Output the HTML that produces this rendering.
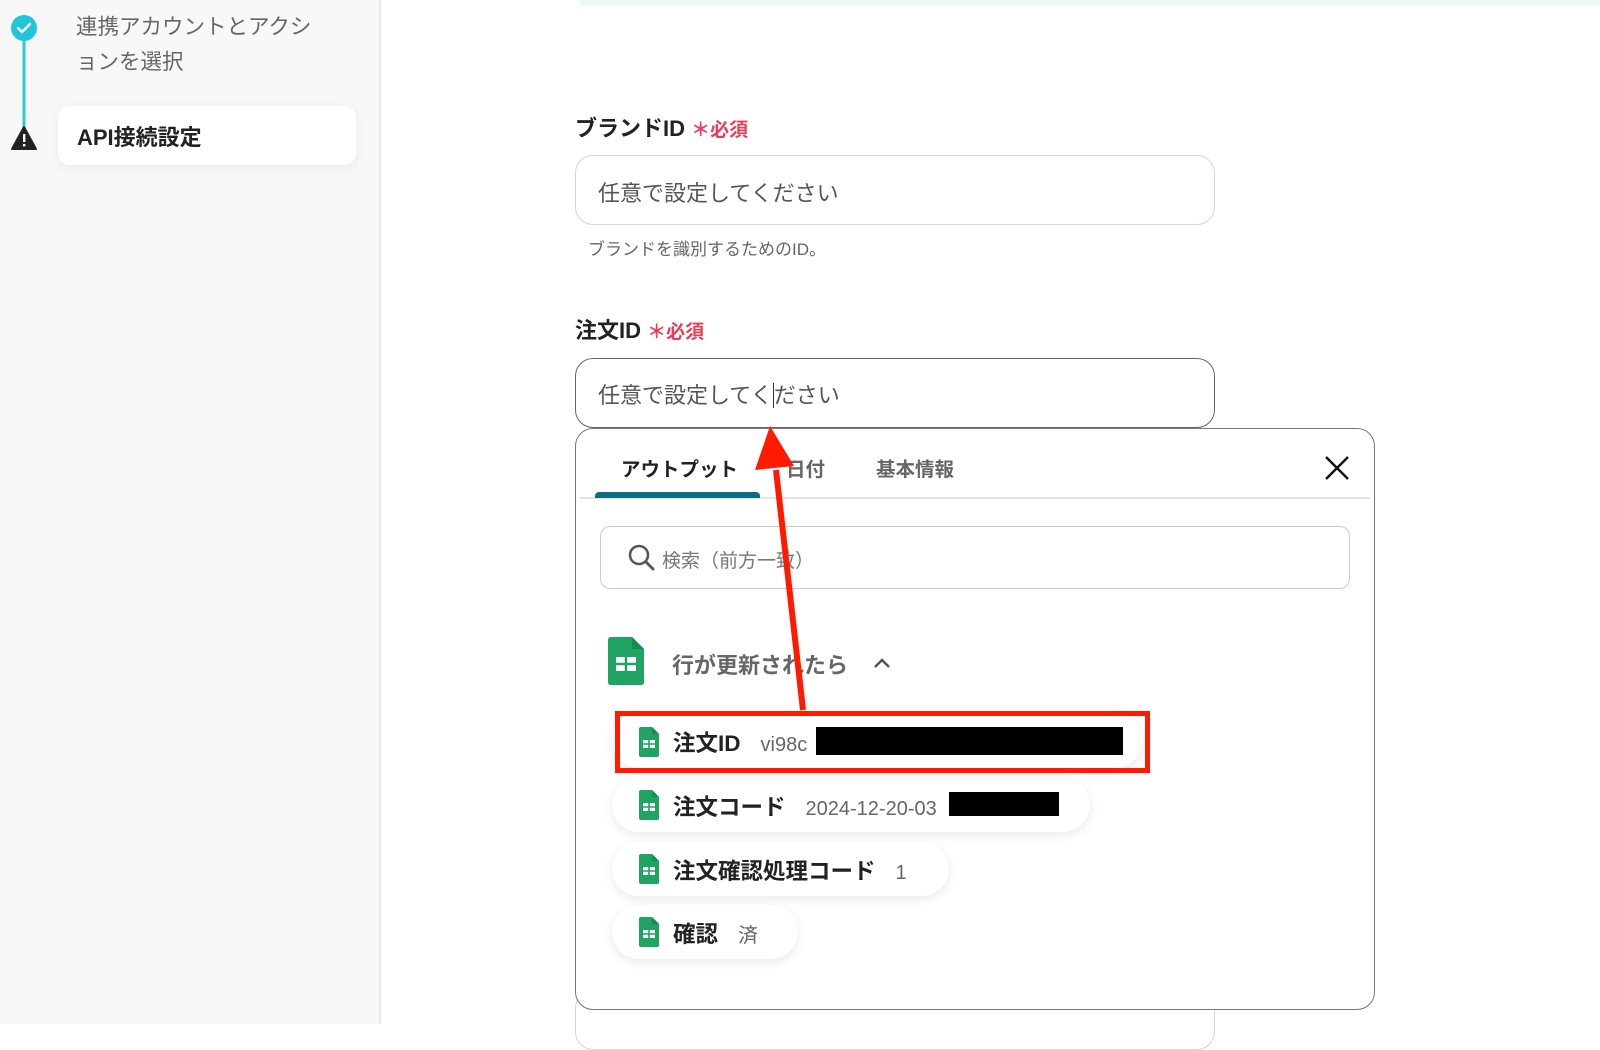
<!DOCTYPE html>
<html><head><meta charset="utf-8"><style>
*{margin:0;padding:0;box-sizing:border-box}
body{width:1600px;height:1024px;overflow:hidden;background:#fff;font-family:"Liberation Sans","Noto Sans CJK JP",sans-serif;position:relative;color:#222}
.a{position:absolute;white-space:nowrap}
.side{position:absolute;left:0;top:0;width:381px;height:1024px;background:#f8f8f8;border-right:2px solid #e6e6e6}
.inp{position:absolute;left:575px;width:640px;height:70px;border-radius:18px;background:#fff}
.ph{font-size:22px;color:#555;left:598px}
.lbl{font-size:22px;font-weight:bold;left:575px;color:#222}
.req{color:#f03b57;font-size:19px;font-weight:bold}
.pill{position:absolute;left:612px;height:54px;border-radius:27px;background:#fff;box-shadow:0 3px 10px rgba(0,0,0,.09)}
.it{font-size:22.5px;font-weight:bold;color:#222;left:673px}
.v{font-size:20px;color:#666;font-weight:normal;margin-left:14px}
</style></head><body>
<div class="side"></div>
<svg class="a" style="left:0;top:0" width="60" height="160">
<line x1="24" y1="30" x2="24" y2="128" stroke="#2ccfcf" stroke-width="3"/>
<circle cx="24" cy="28" r="13" fill="#1ec6d8"/>
<path d="M18 28 l4 4 l8 -8" stroke="#fff" stroke-width="2.5" fill="none" stroke-linecap="round" stroke-linejoin="round"/>
<path d="M24 127 L36 149 L12 149 Z" fill="#222" stroke="#222" stroke-width="2" stroke-linejoin="round"/>
<rect x="23" y="134" width="2.4" height="8" fill="#fff"/><rect x="23" y="144" width="2.4" height="2.4" fill="#fff"/>
</svg>
<div class="a" style="left:76px;top:10px;font-size:21.5px;color:#666;line-height:35px;white-space:normal;width:250px">連携アカウントとアクションを選択</div>
<div class="a" style="left:58px;top:106px;width:298px;height:59px;border-radius:12px;background:#fff;box-shadow:0 3px 12px rgba(0,0,0,.06)"></div>
<div class="a" style="left:77px;top:120px;font-size:22px;font-weight:bold">API接続設定</div>

<div class="a" style="left:578px;top:0;width:1022px;height:6px;background:#f1f8f8;border-radius:0 0 0 8px"></div>

<div class="a lbl" style="top:111px">ブランドID <span class="req">＊必須</span></div>
<div class="inp" style="top:155px;border:1.5px solid #d3d7dd"></div>
<div class="a ph" style="top:176px">任意で設定してください</div>
<div class="a" style="left:588px;top:235px;font-size:17px;color:#666">ブランドを識別するためのID。</div>

<div class="a lbl" style="top:313px">注文ID <span class="req">＊必須</span></div>
<div class="inp" style="top:358px;border:1.5px solid #666"></div>
<div class="a ph" style="top:378px">任意で設定してく<span style="border-left:1px solid #333"></span>ださい</div>

<div class="inp" style="top:990px;height:60px;border:1.5px solid #d3d7dd"></div>
<div class="a" style="left:575px;top:428px;width:800px;height:582px;border:1.5px solid #777;border-radius:18px;background:#fff"></div>
<div class="a" style="left:621px;top:453px;font-size:19.5px;font-weight:bold">アウトプット</div>
<div class="a" style="left:786px;top:453px;font-size:19.5px;font-weight:bold;color:#666">日付</div>
<div class="a" style="left:876px;top:453px;font-size:19.5px;font-weight:bold;color:#666">基本情報</div>
<div class="a" style="left:580px;top:497px;width:790px;height:1.5px;background:#e3e3e3"></div>
<div class="a" style="left:595px;top:492px;width:165px;height:6px;background:#0e6b80;border-radius:4px 4px 0 0"></div>
<svg class="a" style="left:1324px;top:455px" width="26" height="26"><path d="M2 2L24 24M24 2L2 24" stroke="#111" stroke-width="2.5"/></svg>
<div class="a" style="left:600px;top:526px;width:750px;height:63px;border:1.5px solid #ccc;border-radius:10px"></div>
<svg class="a" style="left:628px;top:544px" width="28" height="28"><circle cx="11" cy="11" r="9" stroke="#555" stroke-width="2.5" fill="none"/><path d="M18 18L25 25" stroke="#555" stroke-width="2.8" stroke-linecap="round"/></svg>
<div class="a" style="left:662px;top:546px;font-size:19px;color:#777">検索（前方一致）</div>

<svg class="a" style="left:608px;top:637px" width="36" height="48" viewBox="0 0 36 48"><path d="M3 0H24L36 12V45Q36 48 33 48H3Q0 48 0 45V3Q0 0 3 0Z" fill="#1fa463"/><path d="M24 0V12H36Z" fill="#178a52"/><rect x="8" y="20" width="20" height="14" fill="#fff"/><path d="M8 27H28M18 20V34" stroke="#1fa463" stroke-width="2.5"/></svg>
<div class="a" style="left:672px;top:648px;font-size:22px;font-weight:bold;color:#666">行が更新されたら</div>
<svg class="a" style="left:872px;top:656px" width="20" height="14"><path d="M3 11L10 4L17 11" stroke="#555" stroke-width="2.5" fill="none"/></svg>

<div class="pill" style="top:714px;width:530px"></div>
<div class="pill" style="top:778px;width:478px"></div>
<div class="pill" style="top:842px;width:337px"></div>
<div class="pill" style="top:905px;width:186px"></div>

<svg width="0" height="0" style="position:absolute"><defs><symbol id="s" viewBox="0 0 20 30"><path d="M2 0H13L20 7V28Q20 30 18 30H2Q0 30 0 28V2Q0 0 2 0Z" fill="#1fa463"/><path d="M13 0V7H20Z" fill="#178a52"/><rect x="4" y="13" width="12" height="8" fill="#fff"/><path d="M4 17H16M10 13V21" stroke="#1fa463" stroke-width="1.6"/></symbol></defs></svg>
<svg class="a" style="left:639px;top:727px" width="20" height="30"><use href="#s"/></svg>
<svg class="a" style="left:639px;top:790px" width="20" height="30"><use href="#s"/></svg>
<svg class="a" style="left:639px;top:854px" width="20" height="30"><use href="#s"/></svg>
<svg class="a" style="left:639px;top:917px" width="20" height="30"><use href="#s"/></svg>
<div class="a it" style="top:726px">注文ID<span class="v" style="margin-left:20px">vi98c</span></div>
<div class="a it" style="top:790px">注文コード<span class="v" style="margin-left:20px">2024-12-20-03</span></div>
<div class="a it" style="top:854px">注文確認処理コード<span class="v" style="margin-left:20px">1</span></div>
<div class="a it" style="top:917px">確認<span class="v" style="margin-left:20px">済</span></div>
<div class="a" style="left:816px;top:727px;width:307px;height:28px;background:#000"></div>
<div class="a" style="left:949px;top:792px;width:110px;height:24px;background:#000"></div>
<div class="a" style="left:615px;top:711px;width:535px;height:62px;border:5px solid #ff1a00"></div>

<svg class="a" style="left:0;top:0" width="1600" height="1024">
<line x1="803" y1="710" x2="776" y2="470" stroke="#ff1a00" stroke-width="6"/>
<path d="M770 426 L794 466 L755 470 Z" fill="#ff1a00"/>
</svg>
</body></html>
